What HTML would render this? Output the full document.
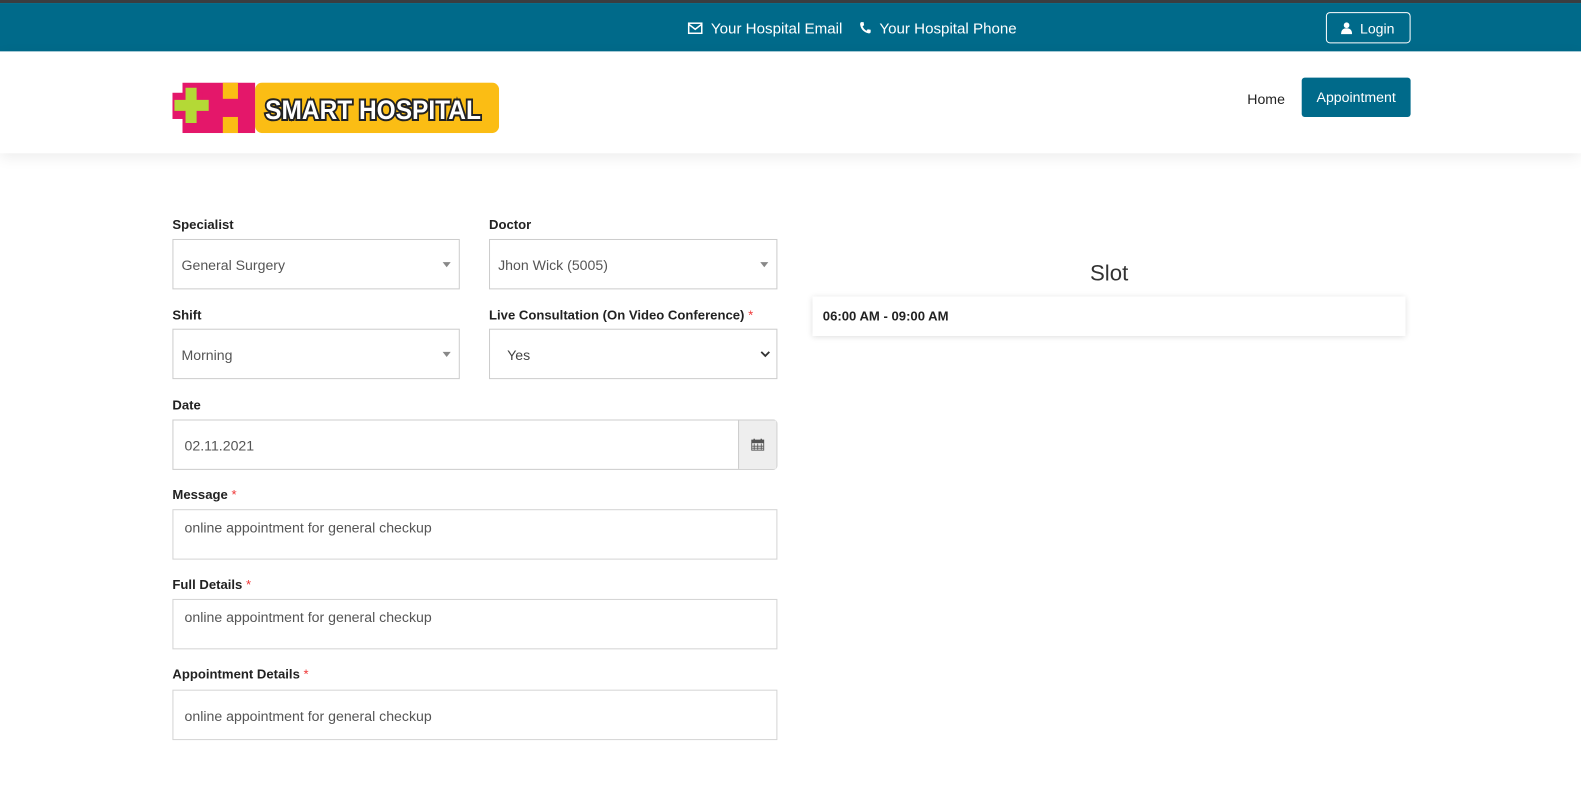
<!DOCTYPE html>
<html><head><meta charset="utf-8"><style>
*{box-sizing:border-box;margin:0;padding:0}
body{width:1581px;height:789px;overflow:hidden;background:#fff;font-family:"Liberation Sans",Arial,sans-serif;color:#333;font-size:14px;position:relative}
#w{position:absolute;left:0;top:0;width:1568px;height:783px;transform:scale(1.0083);transform-origin:0 0}
.strip{position:absolute;left:0;top:0;width:100%;height:3px;background:#3a3d40}
.top{position:absolute;left:0;top:3px;width:100%;height:48px;background:#006a8a;color:#fff;font-size:15px}
.top .c{position:absolute;top:17px;left:682px;white-space:nowrap}
.login{position:absolute;left:1315px;top:9px;width:84px;height:31px;border:1px solid #fff;border-radius:4px;font-size:14px;padding:7px 0 0 14px}
.hdr{position:absolute;left:0;top:51px;width:100%;height:101px;background:#fff;box-shadow:0 4px 14px rgba(0,0,0,.08)}
.home{position:absolute;left:1237px;top:39px;font-size:14px;color:#222}
.appt{position:absolute;left:1291px;top:26px;width:108px;height:39px;background:#006a8a;color:#fff;border-radius:3px;font-size:14px;text-align:center;line-height:39px}
label{position:absolute;font-weight:bold;font-size:13px;color:#222}
label i{color:#e33;font-style:normal;font-weight:normal}
.box{position:absolute;border:1px solid #ccc;height:50px;font-size:14px;color:#555;padding:17px 0 0 8px}
.ta{padding:9px 0 0 11px;border-color:#d4d4d4}
.arr{position:absolute;right:8px;top:22px;width:0;height:0;border-left:4px solid transparent;border-right:4px solid transparent;border-top:5px solid #888}
.slot{position:absolute;left:806px;top:294px;width:588px;height:39px;box-shadow:0 1px 6px rgba(0,0,0,.15);font-weight:bold;font-size:13px;color:#222;padding:12px 0 0 10px}
</style></head><body><div id="w">
<div class="strip"></div>
<div class="top"><div class="c">
<svg width="15" height="12" viewBox="0 0 15 12" style="vertical-align:-1px"><rect x="1" y="1" width="13" height="10" fill="none" stroke="#fff" stroke-width="1.5"/><path d="M1 2 L7.5 7 L14 2" fill="none" stroke="#fff" stroke-width="1.5"/></svg>&nbsp; Your Hospital Email &nbsp;&nbsp;
<svg width="12" height="13" viewBox="0 0 12 13" style="vertical-align:-1px"><path d="M2 1 L4.5 1 L5 4 L3.5 5 Q5 8.5 7.5 9.5 L8.5 8 L11.5 8.5 L11.5 11 Q11 12.5 9 12 Q2 10 1 3 Q1 1.5 2 1Z" fill="#fff"/></svg>&nbsp; Your Hospital Phone</div>
<div class="login"><svg width="11" height="12" viewBox="0 0 11 12" style="vertical-align:-1px"><circle cx="5.5" cy="3" r="2.8" fill="#fff"/><path d="M0 12 Q0 6 5.5 6 Q11 6 11 12Z" fill="#fff"/></svg>&nbsp; Login</div></div>
<div class="hdr">
<svg style="position:absolute;left:171px;top:31px" width="324" height="50" viewBox="0 0 324 50">
<rect x="82" y="0" width="242" height="50" rx="7" fill="#fbbd14"/>
<rect x="10" y="0" width="72" height="50" fill="#e4176a"/>
<rect x="0" y="10" width="30" height="26" fill="#e4176a"/>
<path d="M13 5 H24 V17 H36 V28 H24 V40 H13 V28 H2 V17 H13Z" fill="#b4d936"/>
<rect x="50" y="0" width="15" height="16" fill="#fbbd14"/><rect x="50" y="34" width="15" height="16" fill="#fbbd14"/>
<text x="92" y="36" font-family="Liberation Sans" font-weight="bold" font-size="27" fill="#fff" stroke="#222" stroke-width="4" paint-order="stroke" textLength="214" lengthAdjust="spacingAndGlyphs">SMART HOSPITAL</text>
</svg>
<div class="home">Home</div><div class="appt">Appointment</div></div>

<label style="left:171px;top:215px">Specialist</label>
<div class="box" style="left:171px;top:237px;width:285px">General Surgery<span class="arr"></span></div>
<label style="left:485px;top:215px">Doctor</label>
<div class="box" style="left:485px;top:237px;width:286px">Jhon Wick (5005)<span class="arr"></span></div>
<label style="left:171px;top:305px">Shift</label>
<div class="box" style="left:171px;top:326px;width:285px">Morning<span class="arr"></span></div>
<label style="left:485px;top:305px">Live Consultation (On Video Conference) <i>*</i></label>
<div class="box" style="left:485px;top:326px;width:286px;padding-left:17px;color:#444">Yes
<svg style="position:absolute;right:6px;top:21px" width="10" height="7" viewBox="0 0 10 7"><path d="M1 1 L5 5 L9 1" fill="none" stroke="#333" stroke-width="1.8"/></svg></div>
<label style="left:171px;top:394px">Date</label>
<div class="box" style="left:171px;top:416px;width:600px;padding-left:11px;border-radius:0 4px 4px 0">02.11.2021
<div style="position:absolute;right:0;top:0;width:38px;height:48px;background:#eee;border-left:1px solid #ccc">
<svg style="position:absolute;left:12px;top:18px" width="13" height="12" viewBox="0 0 13 12"><rect x="0.5" y="1.5" width="12" height="10" fill="none" stroke="#555"/><rect x="0.5" y="1.5" width="12" height="3" fill="#555"/><path d="M3 5v6M6.5 5v6M10 5v6M1 7.5h11M1 9.5h11" stroke="#555" stroke-width=".8"/><path d="M3 0v3M10 0v3" stroke="#555" stroke-width="1.4"/></svg></div></div>
<label style="left:171px;top:483px">Message <i>*</i></label>
<div class="box ta" style="left:171px;top:505px;width:600px">online appointment for general checkup</div>
<label style="left:171px;top:572px">Full Details <i>*</i></label>
<div class="box ta" style="left:171px;top:594px;width:600px">online appointment for general checkup</div>
<label style="left:171px;top:661px">Appointment Details <i>*</i></label>
<div class="box ta" style="left:171px;top:684px;width:600px;padding-top:17px">online appointment for general checkup</div>

<div style="position:absolute;left:1000px;width:200px;top:258px;text-align:center;font-size:22px;color:#333">Slot</div>
<div class="slot">06:00 AM - 09:00 AM</div>
</div></body></html>
